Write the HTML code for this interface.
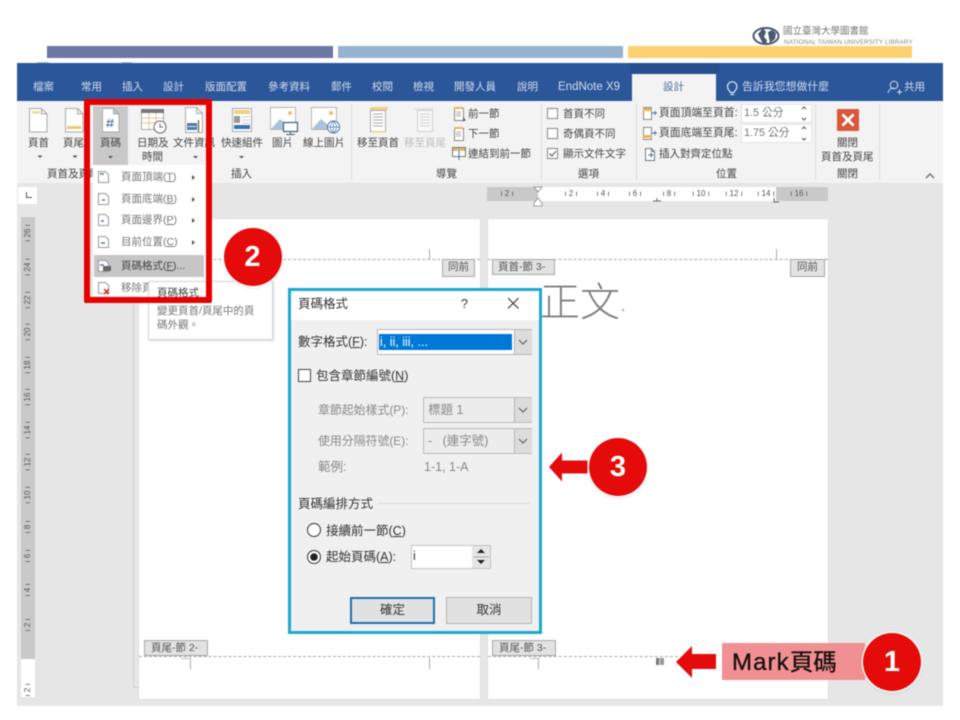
<!DOCTYPE html>
<html lang="zh-Hant"><head><meta charset="utf-8"><title>頁碼格式</title>
<style>
html,body{margin:0;padding:0;background:#fff}
body{width:960px;height:720px;overflow:hidden;position:relative;font-family:"Liberation Sans","Noto Sans CJK TC",sans-serif}
#r{position:absolute;left:0;top:0;width:960px;height:720px;filter:blur(.4px);overflow:hidden}
.b{position:absolute}
.t{position:absolute;white-space:nowrap;line-height:16px;height:16px;font-size:10.5px;color:#444}
.tab{color:#d3dcea;top:79px}
.c{text-align:center}
.g{color:#777}
.f{color:#bdbdbd}
.d{font-size:12.5px;color:#333}
.dg{font-size:12.5px;color:#8a8a8a}
.lbl{position:absolute;background:#e2e2e2;border:1px solid #a8a8a8;color:#555;font-size:10.5px;line-height:15px;height:16px;text-align:center;white-space:nowrap}
.rn{position:absolute;font-size:8px;line-height:10px;color:#555;top:189px;white-space:pre;width:30px;text-align:center}
.vn{position:absolute;left:13px;width:30px;text-align:center;font-size:8px;line-height:10px;color:#555;transform:rotate(-90deg);white-space:pre}
.circ{position:absolute;width:58px;height:58px;border-radius:50%;background:#e60b0b;color:#fff;font-weight:bold;font-size:29px;line-height:58px;text-align:center;box-shadow:0 0 0 1.5px #fff,0 1px 3px rgba(0,0,0,.25)}
.drop{position:absolute;background:#dcdcdc;border-left:1px solid #b5b5b5}
svg{position:absolute;overflow:visible}
u{text-decoration:underline}
</style></head><body><div id="r">

<!-- top slide bars -->
<div class="b" style="left:47px;top:46px;width:286px;height:12px;background:#6b78a3"></div>
<div class="b" style="left:338px;top:46px;width:285px;height:12px;background:#95b3cf"></div>
<div class="b" style="left:628px;top:46px;width:284px;height:12px;background:#fbd26f"></div>
<!-- logo -->
<div class="b" style="left:752px;top:26px;width:165px;height:20px;background:#fff"></div>
<svg style="left:0;top:0" width="960" height="720">
<ellipse cx="766" cy="36" rx="12.5" ry="8" fill="none" stroke="#4a5870" stroke-width="2"/>
<path d="M758 34l5-6 3 4-2 5 3 3-1 5-4-3zM768 32l4-2 4 3-1 6-5 4-1-5z" fill="#4a5870"/>
</svg>
<div class="t" style="left:783px;top:24px;font-size:9.5px;color:#777">國立臺灣大學圖書館</div>
<div class="t" style="left:784px;top:35px;font-size:6.4px;color:#888;letter-spacing:.08px">NATIONAL TAIWAN UNIVERSITY LIBRARY</div>

<!-- window -->
<div class="b" style="left:17px;top:63px;width:926px;height:38px;background:#2b579a"></div>
<div class="b" style="left:630px;top:63px;width:90px;height:11px;background:#264f8e"></div>
<div class="b" style="left:37px;top:62px;width:12px;height:1px;background:#b9c2d3"></div>
<div class="b" style="left:122px;top:62px;width:10px;height:1px;background:#b9c2d3"></div>
<div class="b" style="left:17px;top:101px;width:926px;height:82px;background:#f3f3f3"></div>
<div class="b" style="left:17px;top:183px;width:926px;height:523px;background:#e6e6e6"></div>
<div class="b" style="left:632px;top:74px;width:84px;height:27px;background:#f3f3f3"></div>

<!-- tabs -->
<div class="t tab" style="left:33px">檔案</div>
<div class="t tab" style="left:81px">常用</div>
<div class="t tab" style="left:122px">插入</div>
<div class="t tab" style="left:163px">設計</div>
<div class="t tab" style="left:205px">版面配置</div>
<div class="t tab" style="left:268px">參考資料</div>
<div class="t tab" style="left:331px">郵件</div>
<div class="t tab" style="left:372px">校閱</div>
<div class="t tab" style="left:413px">檢視</div>
<div class="t tab" style="left:454px">開發人員</div>
<div class="t tab" style="left:517px">說明</div>
<div class="t tab" style="left:558px;font-size:11.5px">EndNote X9</div>
<div class="t" style="left:663px;top:79px;color:#4a6fa5">設計</div>
<div class="t tab" style="left:742px;font-size:10.9px">告訴我您想做什麼</div>
<div class="t tab" style="left:904px">共用</div>

<!-- ribbon separators -->
<div class="b" style="left:351px;top:104px;width:1px;height:76px;background:#dcdcdc"></div>
<div class="b" style="left:541px;top:104px;width:1px;height:76px;background:#dcdcdc"></div>
<div class="b" style="left:636px;top:104px;width:1px;height:76px;background:#dcdcdc"></div>
<div class="b" style="left:815px;top:104px;width:1px;height:76px;background:#dcdcdc"></div>
<div class="b" style="left:879px;top:104px;width:1px;height:76px;background:#dcdcdc"></div>

<!-- ribbon labels -->
<div class="t" style="left:28px;top:135px">頁首</div>
<div class="t" style="left:63px;top:135px">頁尾</div>
<div class="b" style="left:93px;top:106px;width:35px;height:60px;background:#c9c9c9"></div>
<div class="t" style="left:100px;top:135px">頁碼</div>
<div class="t" style="left:137px;top:135px">日期及</div>
<div class="t" style="left:142px;top:149px">時間</div>
<div class="t" style="left:173px;top:135px">文件資訊</div>
<div class="t" style="left:221px;top:135px">快速組件</div>
<div class="t" style="left:272px;top:135px">圖片</div>
<div class="t" style="left:303px;top:135px">線上圖片</div>
<div class="t" style="left:357px;top:135px">移至頁首</div>
<div class="t f" style="left:404px;top:135px">移至頁尾</div>
<div class="t" style="left:468px;top:106px">前一節</div>
<div class="t" style="left:468px;top:126px">下一節</div>
<div class="t" style="left:468px;top:146px">連結到前一節</div>
<div class="t" style="left:47px;top:166px">頁首及頁尾</div>
<div class="t" style="left:231px;top:166px">插入</div>
<div class="t" style="left:436px;top:166px">導覽</div>
<div class="t" style="left:578px;top:166px">選項</div>
<div class="t" style="left:716px;top:166px">位置</div>
<div class="t" style="left:837px;top:166px">關閉</div>
<div class="t" style="left:563px;top:106px">首頁不同</div>
<div class="t" style="left:563px;top:126px">奇偶頁不同</div>
<div class="t" style="left:563px;top:146px">顯示文件文字</div>
<div class="t" style="left:659px;top:105px;font-size:10.8px">頁面頂端至頁首:</div>
<div class="t" style="left:659px;top:125px;font-size:10.8px">頁面底端至頁尾:</div>
<div class="t" style="left:659px;top:146px">插入對齊定位點</div>
<div class="b" style="left:741px;top:104px;width:71px;height:19px;background:#fff;border:1px solid #e4e4e4;box-sizing:border-box"></div>
<div class="b" style="left:741px;top:124px;width:71px;height:19px;background:#fff;border:1px solid #e4e4e4;box-sizing:border-box"></div>
<div class="t g" style="left:744px;top:105px;font-size:10.8px">1.5 公分</div>
<div class="t g" style="left:744px;top:125px;font-size:10.8px">1.75 公分</div>
<div class="t" style="left:837px;top:135px">關閉</div>
<div class="t" style="left:821px;top:149px">頁首及頁尾</div>

<!-- rulers -->
<div class="b" style="left:487px;top:187px;width:341px;height:14px;background:#c9c9c9"></div>
<div class="b" style="left:538px;top:187px;width:238px;height:14px;background:#fff"></div>
<div class="rn" style="left:492px">ı 2 ı</div><div class="rn" style="left:556px">ı 2 ı</div><div class="rn" style="left:588px">ı 4 ı</div><div class="rn" style="left:620px">ı 6 ı</div><div class="rn" style="left:654px">ı 8 ı</div><div class="rn" style="left:686px">ı 10 ı</div><div class="rn" style="left:719px">ı 12 ı</div><div class="rn" style="left:751px">ı 14 ı</div><div class="rn" style="left:784px">ı 16 ı</div>
<div class="b" style="left:18px;top:187px;width:19px;height:17px;background:#fff"></div>
<div class="b" style="left:26px;top:192px;width:1px;height:6px;background:#555"></div>
<div class="b" style="left:26px;top:197px;width:6px;height:1px;background:#555"></div>
<div class="b" style="left:21px;top:217px;width:14px;height:442px;background:#c9c9c9"></div>
<div class="b" style="left:21px;top:659px;width:14px;height:38px;background:#fff"></div>
<div class="vn" style="top:228px">ı 26 ı</div><div class="vn" style="top:262px">ı 24 ı</div><div class="vn" style="top:295px">ı 22 ı</div><div class="vn" style="top:327px">ı 20 ı</div><div class="vn" style="top:360px">ı 18 ı</div><div class="vn" style="top:392px">ı 16 ı</div><div class="vn" style="top:425px">ı 14 ı</div><div class="vn" style="top:457px">ı 12 ı</div><div class="vn" style="top:490px">ı 10 ı</div><div class="vn" style="top:522px">ı 8 ı</div><div class="vn" style="top:551px">ı 6 ı</div><div class="vn" style="top:585px">ı 4 ı</div><div class="vn" style="top:620px">ı 2 ı</div><div class="vn" style="top:685px">ı 2 ı</div>

<!-- pages -->
<div class="b" style="left:133px;top:300px;width:6px;height:387px;border-left:1px solid #d0d0d0;border-bottom:1px solid #d0d0d0"></div>
<div class="b" style="left:139px;top:219px;width:341px;height:480px;background:#fff;box-shadow:0 0 1px #bbb"></div>
<div class="b" style="left:488px;top:219px;width:340px;height:480px;background:#fff;box-shadow:0 0 1px #bbb"></div>
<div class="b" style="left:139px;top:259px;width:341px;border-top:1px dashed #aaa"></div>
<div class="b" style="left:488px;top:259px;width:340px;border-top:1px dashed #aaa"></div>
<div class="b" style="left:139px;top:656px;width:341px;border-top:1px dashed #aaa"></div>
<div class="b" style="left:488px;top:656px;width:190px;border-top:1px dashed #aaa"></div>
<div class="b" style="left:776px;top:249px;width:1px;height:10px;background:#aaa"></div>
<div class="b" style="left:429px;top:249px;width:1px;height:10px;background:#aaa"></div>
<div class="b" style="left:190px;top:658px;width:1px;height:11px;background:#aaa"></div>
<div class="b" style="left:181px;top:658px;width:9px;height:1px;background:#bbb"></div>
<div class="b" style="left:538px;top:658px;width:1px;height:11px;background:#aaa"></div>
<div class="b" style="left:530px;top:658px;width:8px;height:1px;background:#bbb"></div>
<div class="b" style="left:429px;top:658px;width:1px;height:11px;background:#aaa"></div>
<div class="b" style="left:656px;top:658px;width:8px;height:7px;background:linear-gradient(90deg,#777 0 35%,#ddd 35% 50%,#999 50%)"></div>

<div class="lbl" style="left:442px;top:259px;width:31px">同前</div>
<div class="lbl" style="left:492px;top:259px;width:63px;text-align:left;padding-left:5px;box-sizing:border-box">頁首-節 3-</div>
<div class="lbl" style="left:790px;top:259px;width:33px">同前</div>
<div class="lbl" style="left:144px;top:640px;width:64px;text-align:left;padding-left:6px;box-sizing:border-box">頁尾-節 2-</div>
<div class="lbl" style="left:492px;top:640px;width:64px;text-align:left;padding-left:6px;box-sizing:border-box">頁尾-節 3-</div>
<div class="t" style="left:540px;top:276px;font-size:40px;line-height:46px;height:46px;color:#7f7f7f;font-family:'Noto Sans CJK TC',sans-serif;font-weight:300">正文</div>
<div class="b" style="left:622px;top:309px;width:2px;height:2px;background:#aaa"></div>

<!-- icons -->
<svg style="left:0;top:0" width="960" height="720" fill="none">
<!-- header/footer/page no -->
<path d="M29.5 108.5h12l5.500 5.500v18h-17.500zM41.500 108.500v5.500h5.500" fill="#fff" stroke="#a9a9a9"/>
<rect x="32" y="111" width="8" height="2.500" fill="#f0d79a"/>
<path d="M65.500 108.500h12l5.500 5.500v18h-17.500zM77.500 108.500v5.500h5.500" fill="#fff" stroke="#a9a9a9"/>
<rect x="67" y="126" width="14" height="3" fill="#efc878"/>
<path d="M102.500 108.500h11l5.500 5.500v18h-16.500zM113.500 108.500v5.500h5.500" fill="#fff" stroke="#a9a9a9"/>
<path d="M109 119l-1.500 8M112.500 119l-1.500 8M106.500 121.500h7.500M106 125h7.500" stroke="#4a76a8"/>
<!-- calendar -->
<rect x="141.500" y="109.500" width="22" height="20" fill="#fff" stroke="#aaa"/>
<rect x="141" y="109" width="23" height="4" fill="#777"/>
<path d="M142 118h21M142 123h21M149 113v16M156 113v16" stroke="#e3c99a"/>
<circle cx="160" cy="127" r="6" fill="#fff" stroke="#666"/><path d="M160 123.500v3.500h3" stroke="#666"/>
<!-- doc info -->
<path d="M185.500 107.500h11l6 6v19h-17zM196.500 107.500v6h6" fill="#fff" stroke="#a9a9a9"/>
<rect x="187" y="123" width="10" height="7" fill="#4d7da8"/><path d="M188 126.500h8" stroke="#dfe7ef"/><path d="M198.500 120v12" stroke="#7a5a2a" stroke-width="1.200"/>
<!-- quick parts -->
<rect x="232.500" y="108.500" width="19" height="23" fill="#fff" stroke="#a9a9a9"/>
<rect x="234" y="110" width="16" height="4" fill="#f0d089"/><rect x="234" y="116" width="6" height="7" fill="#999"/><path d="M242 117h8M242 120h8M242 123h8" stroke="#ccc"/><rect x="234" y="125" width="16" height="4" fill="#3f6fa3"/>
<!-- pictures -->
<rect x="270.500" y="107.500" width="25" height="22" fill="#fff" stroke="#b5b5b5"/><circle cx="290" cy="113" r="2" fill="#f3bb77"/><path d="M271 129l9-10 6 5 3 5z" fill="#aac2dc"/>
<rect x="283.500" y="122.500" width="14" height="9" fill="#fff" stroke="#39627f" stroke-width="1.200"/><path d="M290.500 131.500v3M286 134.500h9" stroke="#39627f"/>
<rect x="311.500" y="107.500" width="25" height="22" fill="#fff" stroke="#b5b5b5"/><circle cx="331" cy="113" r="2" fill="#f3bb77"/><path d="M312 129l9-10 6 5 3 5z" fill="#aac2dc"/>
<circle cx="333.500" cy="127" r="6" fill="#fff" stroke="#4a76a8"/><path d="M327.500 127h12M333.500 121v12M333.500 121c-4 3-4 9 0 12M333.500 121c4 3 4 9 0 12" stroke="#4a76a8" stroke-width=".7"/>
<!-- nav -->
<rect x="370.500" y="110.500" width="15" height="21" fill="#fff" stroke="#aaa"/><rect x="370" y="107" width="18" height="3" fill="#f0d089"/><path d="M373 114h10M373 117h10M373 120h10M373 123h10M373 126h10" stroke="#aaa"/><rect x="372" y="131" width="14" height="1.500" fill="#f0d089"/>
<g opacity=".45"><rect x="417.500" y="110.500" width="15" height="21" fill="#fff" stroke="#aaa"/><path d="M420 114h10M420 117h10M420 120h10M420 123h10M420 126h10" stroke="#aaa"/><rect x="415" y="108" width="18" height="2" fill="#ccc"/></g>
<rect x="454.500" y="108.500" width="9" height="12" fill="#fff" stroke="#888"/><rect x="454" y="107" width="9" height="2" fill="#e8b45c"/><path d="M456 112h5M456 114h5M456 116h5" stroke="#aaa"/><path d="M463 118l2 2-2 1" stroke="#446"/>
<rect x="454.500" y="128.500" width="9" height="12" fill="#fff" stroke="#888"/><rect x="454" y="127" width="9" height="2" fill="#e8b45c"/><path d="M456 132h5M456 134h5M456 136h5" stroke="#aaa"/>
<rect x="452.500" y="147.500" width="13" height="9" fill="#fff" stroke="#777"/><rect x="453" y="148" width="5" height="3" fill="#e8b45c"/><rect x="460" y="148" width="5" height="3" fill="#e8b45c"/><path d="M459 147v13" stroke="#4a76a8"/>
<!-- checkboxes -->
<rect x="547.500" y="108.500" width="10" height="10" fill="#fff" stroke="#888"/>
<rect x="547.500" y="128.500" width="10" height="10" fill="#fff" stroke="#888"/>
<rect x="547.500" y="148.500" width="10" height="10" fill="#fff" stroke="#888"/><path d="M549.500 153.500l2.500 2.500 4-5" stroke="#444"/>
<!-- position icons -->
<rect x="643.500" y="107.500" width="8" height="12" fill="#fff" stroke="#888"/><rect x="643" y="108" width="9" height="3" fill="#e8b45c"/><path d="M652 113h5M655 111v4" stroke="#4a76a8"/>
<rect x="643.500" y="127.500" width="8" height="12" fill="#fff" stroke="#888"/><rect x="643" y="135" width="9" height="3" fill="#e8b45c"/><path d="M652 133h5M655 131v4" stroke="#4a76a8"/>
<path d="M645.500 148.500h6l3 3v9h-9zM651.500 148.500v3h3" fill="#fff" stroke="#777"/><path d="M648 155h4M650.500 153l2 2-2 2" stroke="#4a76a8"/>
<!-- spinners -->
<path d="M802 109l2-2 2 2M802 118l2 2 2-2M802 129l2-2 2 2M802 138l2 2 2-2" stroke="#555"/>
<!-- close -->
<rect x="837" y="109" width="22" height="22" fill="#d9583a"/><path d="M842.500 114.500l11 11M853.500 114.500l-11 11" stroke="#fff" stroke-width="2.800"/>
<path d="M926 178l4-4 4 4" stroke="#777" stroke-width="1.500"/>
<!-- drop arrows -->
<path d="M37.500 155.500h5l-2.500 2.500zM72.500 155.500h5l-2.500 2.500zM108 156h5l-2.500 2.500zM193 156h5l-2.500 2.500zM239 156h5l-2.500 2.500z" fill="#555"/>
<!-- tell me / share -->
<path d="M730.500 92.500c-1-2-3-3-3-6a4.700 4.700 0 0 1 9.400 0c0 3-2 4-3 6zM730.500 94.500h3.500" stroke="#dfe6f1" stroke-width="1.200"/>
<circle cx="894" cy="85" r="3.800" stroke="#d8e0ec"/><path d="M888 93c1-4 3-5 6-5M897 92h5M899.500 89.500v5" stroke="#d8e0ec"/>
<!-- ruler details -->
<path d="M534 187h8l-4 5zM534 203l4-5 4 5v3h-8z" fill="#fff" stroke="#888" stroke-width=".8"/>
<path d="M657 198v3M653 201h8M774 198v4h5" stroke="#666"/>
</svg>

<!-- menu -->
<div class="b" style="left:93px;top:165px;width:113px;height:131px;background:#fff"></div>
<div class="b" style="left:94px;top:255px;width:110px;height:22px;background:#c6c6c6"></div>
<div class="t g" style="left:121px;top:169px">頁面頂端(<u>T</u>)</div>
<div class="t g" style="left:121px;top:191px">頁面底端(<u>B</u>)</div>
<div class="t g" style="left:121px;top:212px">頁面邊界(<u>P</u>)</div>
<div class="t g" style="left:121px;top:234px">目前位置(<u>C</u>)</div>
<div class="t" style="left:121px;top:258px">頁碼格式(<u>F</u>)...</div>
<div class="t g" style="left:121px;top:280px">移除頁碼</div>
<svg style="left:0;top:0" width="960" height="720" fill="none">
<g stroke="#999" fill="#fff">
<path d="M98.500 171.500h7l3 3v8h-10z"/><path d="M98.500 193.500h7l3 3v8h-10z"/><path d="M98.500 214.500h7l3 3v8h-10z"/><path d="M98.500 236.500h7l3 3v8h-10z"/><path d="M98.500 260.500h7l3 3v8h-10z"/><path d="M98.500 282.500h7l3 3v8h-10z"/></g>
<path d="M100 174h4M102 200h3M101 221h3M101 243h4M100 265h4" stroke="#567aa6" stroke-width="1.500"/>
<rect x="103" y="266" width="8" height="5" fill="#666"/>
<path d="M104 289l5 5M109 289l-5 5" stroke="#dd2a2a" stroke-width="1.500"/>
<path d="M192 175l3 2.500-3 2.500zM192 197l3 2.500-3 2.500zM192 218l3 2.500-3 2.500zM192 240l3 2.500-3 2.500z" fill="#555"/>
</svg>
<!-- tooltip -->
<div class="b" style="left:148px;top:281px;width:125px;height:59px;background:#fff;border:1px solid #d5d5d5;box-sizing:border-box;box-shadow:1px 1px 2px rgba(0,0,0,.15)"></div>
<div class="t" style="left:157px;top:285px">頁碼格式</div>
<div class="t g" style="left:157px;top:303px">變更頁首/頁尾中的頁</div>
<div class="t g" style="left:157px;top:317px">碼外觀。</div>
<!-- red box -->
<div class="b" style="left:84px;top:99px;width:128px;height:204px;border:6.500px solid #e60000;box-sizing:border-box;border-radius:2px"></div>
<div class="circ" style="left:223.500px;top:228px">2</div>

<!-- dialog -->
<div class="b" style="left:288px;top:288px;width:254px;height:346px;border:3px solid #1fa8cf;box-sizing:border-box;background:#f0f0f0"></div>
<div class="b" style="left:291px;top:291px;width:248px;height:29px;background:#fff"></div>
<div class="t d" style="left:298px;top:296px">頁碼格式</div>
<div class="t d" style="left:461px;top:296px">?</div>
<svg style="left:0;top:0" width="960" height="720" fill="none"><path d="M508 298l10.500 10.500M518.500 298l-10.500 10.500" stroke="#333" stroke-width="1.100"/></svg>
<div class="t d" style="left:298px;top:334px">數字格式(<u>F</u>):</div>
<div class="b" style="left:377px;top:329px;width:155px;height:26px;background:#fff;border:1px solid #b5b5b5;box-sizing:border-box"></div>
<div class="b" style="left:379px;top:334px;width:133px;height:16px;background:#0078d7"></div>
<div class="t" style="left:380px;top:334px;font-size:12.5px;color:#fff">i, ii, iii, ...</div>
<div class="drop" style="left:514px;top:330px;width:17px;height:24px"></div>
<div class="b" style="left:298px;top:369px;width:13px;height:13px;background:#fff;border:1px solid #444;box-sizing:border-box"></div>
<div class="t d" style="left:316px;top:368px">包含章節編號(<u>N</u>)</div>
<div class="t dg" style="left:318px;top:402px;font-size:11.9px">章節起始樣式(P):</div>
<div class="b" style="left:423px;top:397px;width:109px;height:26px;background:#ececec;border:1px solid #bcbcbc;box-sizing:border-box"></div>
<div class="drop" style="left:514px;top:398px;width:17px;height:24px"></div>
<div class="t dg" style="left:428px;top:402px">標題 1</div>
<div class="t dg" style="left:318px;top:433px;font-size:11.9px">使用分隔符號(E):</div>
<div class="b" style="left:423px;top:428px;width:109px;height:26px;background:#ececec;border:1px solid #bcbcbc;box-sizing:border-box"></div>
<div class="drop" style="left:514px;top:429px;width:17px;height:24px"></div>
<div class="t dg" style="left:428px;top:433px;white-space:pre">-   (連字號)</div>
<div class="t dg" style="left:318px;top:459px">範例:</div>
<div class="t dg" style="left:424px;top:459px">1-1, 1-A</div>
<div class="t d" style="left:298px;top:496px">頁碼編排方式</div>
<div class="b" style="left:378px;top:503px;width:152px;height:1px;background:#dcdcdc"></div>
<div class="t d" style="left:326px;top:523px">接續前一節(<u>C</u>)</div>
<div class="t d" style="left:326px;top:549px">起始頁碼(<u>A</u>):</div>
<div class="b" style="left:411px;top:545px;width:80px;height:24px;background:#fff;border:1px solid #c4c4c4;box-sizing:border-box"></div>
<div class="b" style="left:472px;top:546px;width:18px;height:22px;background:#e6e6e6"></div>
<div class="t d" style="left:413px;top:548px">i</div>
<svg style="left:0;top:0" width="960" height="720" fill="none">
<path d="M519 340l4 4 4-4M519 408l4 4 4-4M519 439l4 4 4-4" stroke="#555"/>
<circle cx="314" cy="530" r="6.500" fill="#fff" stroke="#333"/>
<circle cx="314" cy="557" r="6.500" fill="#fff" stroke="#333"/><circle cx="314" cy="557" r="3.800" fill="#222"/>
<path d="M477 553l4-4 4 4zM477 560l4 4 4-4z" fill="#222"/><path d="M473 557h16" stroke="#aaa"/>
</svg>
<div class="b" style="left:350px;top:597px;width:85px;height:27px;background:#e1e1e1;border:2px solid #1f6fb0;box-sizing:border-box;font-size:12.5px;color:#333;line-height:23px;text-align:center">確定</div>
<div class="b" style="left:446px;top:597px;width:86px;height:27px;background:#e1e1e1;border:1px solid #b5b5b5;box-sizing:border-box;font-size:12.5px;color:#333;line-height:25px;text-align:center">取消</div>

<!-- callouts -->
<svg style="left:0;top:0" width="960" height="720">
<path d="M549 467l13-14.500v8h25.500v13h-25.500v8z" fill="#e60b0b"/>
<path d="M676 662l16-16v8h24v15h-24v9z" fill="#e60b0b"/>
</svg>
<div class="circ" style="left:589px;top:438px">3</div>
<div class="b" style="left:722px;top:643px;width:143px;height:37px;background:#f19092"></div>
<div class="t" style="left:732px;top:645px;height:34px;line-height:34px;font-size:23.500px;color:#1a0f0f;-webkit-text-stroke:.35px #1a0f0f"><span style="letter-spacing:1.100px;font-size:24px">Mark</span>頁碼</div>
<div class="circ" style="left:863px;top:633px">1</div>
</div></body></html>
